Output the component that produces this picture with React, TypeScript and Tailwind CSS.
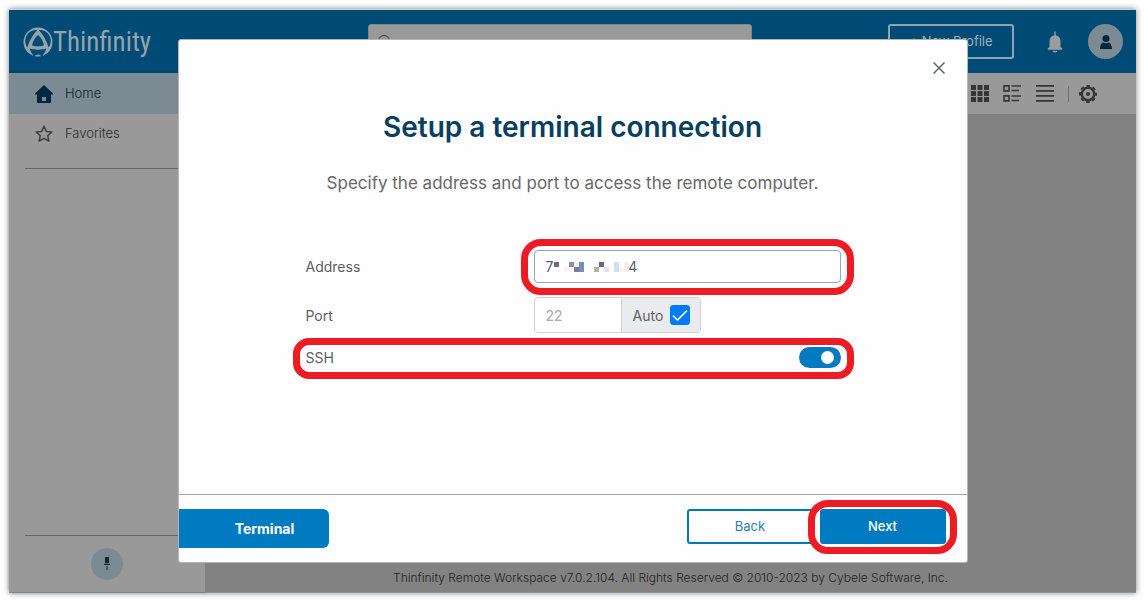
import { useState } from "react";
import type { ReactNode } from "react";

function Logo() {
  return (
    <a href="#" className="flex items-center text-[#97a3ab]" aria-label="Thinfinity">
      <svg viewBox="0 0 30 30" className="h-[30px] w-[30px]">
        <circle cx="15" cy="15" r="14.500" fill="currentColor" />
        <g fill="#004b76">
          <path d="M15 8C18 10.300 20.300 14 21 18.200C17.500 19.800 12.500 19.800 9 18.200C9.700 14 12 10.300 15 8Z" />
          <path d="M6.500 21.500C11.500 23 18.500 23 23.500 21.500C22.500 24.500 20.500 27 19 30C17.500 26.500 12.500 26.500 11 30C9.500 27 7.500 24.500 6.500 21.500Z" />
          <path transform="rotate(120 15 15)" d="M5 21.500C11 23 19 23 25 21.500C23 26 19 28 15 28C11 28 7 26 5 21.500Z" />
          <path transform="rotate(240 15 15)" d="M5 21.500C11 23 19 23 25 21.500C23 26 19 28 15 28C11 28 7 26 5 21.500Z" />
        </g>
      </svg>
      <span className="font-['Liberation_Sans_Narrow','Roboto_Condensed',sans-serif] text-[27px] leading-9">Thinfinity</span>
    </a>
  );
}

function Highlight({ className, children }: { className: string; children?: ReactNode }) {
  return (
    <span aria-hidden="true" className={`pointer-events-none absolute border-[7px] border-[#ed1c24] ${className}`}>
      {children}
    </span>
  );
}

function Header() {
  return (
    <header className="flex h-[63px] shrink-0 items-center bg-[#004b76] pr-[13px] pl-[14px]">
      <div className="w-[345px] shrink-0">
        <Logo />
      </div>
      <label className="flex h-[35px] w-[384px] items-center rounded-[3px] border border-[#7c8990] bg-[#999999] px-2">
        <svg viewBox="0 0 16 16" className="h-4 w-4" fill="none" stroke="#2c3a42" strokeWidth="1">
          <circle cx="7" cy="7" r="5.500" />
          <path d="M11 11l4 4" />
        </svg>
        <input type="search" aria-label="Search connections" className="min-w-0 flex-1 bg-transparent outline-none" />
      </label>
      <div className="ml-auto flex items-center">
        <button className="h-[35px] w-[126px] rounded-[3px] border-2 border-[#8fa4b0] text-[13px] text-[#9fb0ba]">
          + New Profile
        </button>
        <button aria-label="Notifications" className="ml-[32px]">
          <svg viewBox="0 0 18 22" className="h-[22px] w-[18px]" fill="#999da0">
            <path d="M8.300 1a.7.700 0 0 1 1.400 0v3.200c3 .4 4.800 2.800 4.800 5.800v6l1.800 1.600v1.200H1.700v-1.200l1.800-1.600v-6c0-3 1.800-5.400 4.800-5.800z" />
            <path d="M6.500 19.800h5a2.500 1.700 0 0 1-5 0z" />
          </svg>
        </button>
        <button aria-label="Account" className="ml-6 flex h-[35px] w-[35px] items-center justify-center rounded-full bg-[#7c8b93]">
          <svg viewBox="0 0 12 14" className="h-[14px] w-3" fill="#00273d">
            <circle cx="6" cy="3.500" r="3.500" />
            <path d="M0 14c0-4 1.500-6 3-6.500 2 1 4 1 6 0 1.500.5 3 2.500 3 6.500z" />
          </svg>
        </button>
      </div>
    </header>
  );
}

function Sidebar() {
  return (
    <aside className="flex w-[196px] shrink-0 flex-col bg-[#999999] text-[13px] font-light shadow-[1px_0_3px_rgba(0,0,0,0.25)]">
      <nav>
        <a href="#home" className="flex h-[41px] items-center gap-3 bg-[#7c8b93] pl-[26px] text-[#12222b]">
          <svg viewBox="0 0 18 18" className="h-[18px] w-[18px]" fill="#00273d">
            <path fillRule="evenodd" d="M9 0L18 8.500V9.500H16V18H2V9.500H0V8.500ZM7 12v4h4v-4Z" />
          </svg>
          Home
        </a>
        <a href="#favorites" className="flex h-10 items-center gap-3 pl-[26px] text-[#2c2c2c]">
          <svg viewBox="0 0 18 18" className="h-[18px] w-[18px]" fill="none" stroke="#3f3f3f" strokeWidth="1.500" strokeLinejoin="round">
            <path d="M9 1.300l2.300 5.100 5.600.6-4.200 3.700 1.200 5.500L9 13.400l-4.900 2.800 1.200-5.500L1.100 7l5.600-.6z" />
          </svg>
          Favorites
        </a>
      </nav>
      <hr className="mx-4 mt-[14px] border-[#666666]" />
      <hr className="mx-4 mt-auto border-[#666666]" />
      <button aria-label="Pin sidebar" className="mx-auto my-3 flex h-8 w-8 items-center justify-center rounded-full bg-[#7c8b93]">
        <svg viewBox="0 0 8 14" className="h-[14px] w-2" fill="#0c2634">
          <path d="M2 0h4v6H2zM1 6.800h6v1.200H1zM3.500 9h1v4h-1z" />
        </svg>
      </button>
    </aside>
  );
}

function Toolbar() {
  return (
    <div className="flex h-[41px] items-center justify-end bg-[#999999] pr-[39px] text-[#363636]">
      <button aria-label="Grid view">
        <svg viewBox="0 0 18 18" className="h-[18px] w-[18px]" fill="currentColor">
          <path d="M0 0h5v5H0zM6.500 0h5v5h-5zM13 0h5v5h-5zM0 6h5v5H0zM6.500 6h5v5h-5zM13 6h5v5h-5zM0 12h5v5H0zM6.500 12h5v5h-5zM13 12h5v5h-5z" />
        </svg>
      </button>
      <button aria-label="Detail view" className="ml-[14px]">
        <svg viewBox="0 0 18 18" className="h-[18px] w-[18px]" fill="none" stroke="currentColor" strokeWidth="1.600">
          <path d="M1 .9h5v5H1zM1 10.900h5v5H1zM8.500 1h9.500M8.500 5.500h7.500M8.500 11h9.500M8.500 15.500h7.500" />
        </svg>
      </button>
      <button aria-label="List view" className="ml-[15px]">
        <svg viewBox="0 0 18 18" className="h-[18px] w-[18px]" fill="currentColor">
          <path d="M0 0h18v1.800H0zM0 5h18v1.800H0zM0 10h18v1.800H0zM0 15h18v1.800H0z" />
        </svg>
      </button>
      <span className="ml-[14px] h-4 w-px bg-[#707070]" />
      <button aria-label="Settings" className="ml-[10px]">
        <svg viewBox="0 0 18 18" className="h-[18px] w-[18px]" fill="none" stroke="currentColor">
          <circle cx="9" cy="9" r="6.200" strokeWidth="2.400" />
          <circle cx="9" cy="9" r="8" strokeWidth="2" strokeDasharray="3.540 2.740" strokeDashoffset="1.770" />
          <circle cx="9" cy="9" r="2.100" fill="currentColor" stroke="none" />
        </svg>
      </button>
    </div>
  );
}

const mosaic: [number, number, number, number, string][] = [
  [0, 0, 5, 5, "#6f6f73"],
  [10, 5, 5, 5, "#fdf3ee"],
  [15, 0, 5, 5, "#8b8f99"],
  [20, 0, 5, 5, "#e2f4fd"],
  [20, 5, 5, 5, "#7d7b93"],
  [25, 0, 5, 10, "#7590b5"],
  [40, 5, 5, 5, "#b9b0a1"],
  [45, 0, 5, 5, "#5d6b86"],
  [50, 5, 5, 5, "#e9dcf1"],
  [60, 0, 5, 10, "#d2ddf7"],
  [65, 5, 5, 5, "#fbf8e9"],
  [70, 0, 5, 10, "#f6eeec"],
];

const fieldLabel = "w-[228px] shrink-0";

function ConnectionDialog({ onClose }: { onClose: () => void }) {
  const [address, setAddress] = useState("7" + " ".repeat(19) + "4");
  const [auto, setAuto] = useState(true);
  const [ssh, setSsh] = useState(true);
  return (
    <section
      role="dialog"
      aria-modal="true"
      aria-labelledby="dialog-title"
      className="relative flex min-h-[524px] w-[790px] flex-col rounded-[3px] border border-[#b5b5b5] bg-[#fefdff]"
    >
      <button aria-label="Close" onClick={onClose} className="absolute top-[22px] right-[22px] text-[#5c6670]">
        <svg viewBox="0 0 12 12" className="h-3 w-3" fill="none" stroke="currentColor" strokeWidth="1.500">
          <path d="M.5.500l11 11M11.500.500l-11 11" />
        </svg>
      </button>

      <h1 id="dialog-title" className="mt-[67px] text-center text-[28px] leading-10 font-semibold text-[#05405f]">
        Setup a terminal connection
      </h1>
      <p className="mt-6 text-center text-[17px] leading-6 text-[#686868]">
        Specify the address and port to access the remote computer.
      </p>

      <form className="mt-[55px] mr-[126px] ml-[127px] flex flex-col text-[14px] text-[#5f5f5f]">
        <div className="flex items-center">
          <label htmlFor="address" className={fieldLabel}>Address</label>
          <div className="relative flex-1">
            <input
              id="address"
              value={address}
              onChange={(e) => setAddress(e.target.value)}
              className="block h-[33px] w-full rounded-[4px] border border-[#98a5b0] bg-transparent px-[11px] outline-none"
            />
            <svg viewBox="0 0 75 10" className="pointer-events-none absolute top-3 left-[20px] h-[10px] w-[75px]" shapeRendering="crispEdges">
              {mosaic.map(([x, y, w, h, fill]) => (
                <rect key={`${x}-${y}`} x={x} y={y} width={w} height={h} fill={fill} />
              ))}
            </svg>
            <Highlight className="-inset-x-[13px] -top-[11px] -bottom-3 rounded-[20px]" />
          </div>
        </div>

        <div className="mt-[14px] flex items-center">
          <label htmlFor="port" className={fieldLabel}>Port</label>
          <div className="flex h-9 overflow-hidden rounded-[4px] border border-[#cfd3d8]">
            <input id="port" defaultValue="22" disabled={auto} className="w-[86px] px-[11px] text-[#a9a9a9] outline-none" />
            <label className="flex items-center gap-[7px] border-l border-[#cfd3d8] bg-[#e9ebef] pr-[10px] pl-[11px]">
              Auto
              <span className="relative h-5 w-5">
                <input
                  type="checkbox"
                  checked={auto}
                  onChange={(e) => setAuto(e.target.checked)}
                  className="peer block h-5 w-5 appearance-none rounded-[3px] border border-[#007bff] checked:bg-[#007bff]"
                />
                <svg viewBox="0 0 20 20" className="pointer-events-none absolute inset-0 hidden h-5 w-5 peer-checked:block" fill="none" stroke="white" strokeWidth="1.600">
                  <path d="M3 10.500L7.500 15L17 5.500" />
                </svg>
              </span>
            </label>
          </div>
        </div>

        <div className="relative mt-3 flex h-[25px] items-center justify-between">
          <label htmlFor="ssh">SSH</label>
          <span className="relative h-[21px] w-[42px]">
            <input
              id="ssh"
              type="checkbox"
              role="switch"
              checked={ssh}
              onChange={(e) => setSsh(e.target.checked)}
              className="peer block h-[21px] w-[42px] appearance-none rounded-full bg-[#9aa5ad] checked:bg-[#007ac1]"
            />
            <span className="pointer-events-none absolute top-1 left-[7px] h-[13px] w-[13px] rounded-full bg-white peer-checked:left-[22px]" />
          </span>
          <Highlight className="-inset-x-[13px] -top-[7px] -bottom-[9px] rounded-[16px]" />
        </div>
      </form>

      <footer className="mt-auto flex h-[68px] items-start border-t border-[#a3a3a3] pt-[14px] pr-[21px]">
        <button className="h-[39px] w-[150px] rounded-r-[6px] bg-[#007ac1] pl-[22px] text-[14px] font-bold text-white">Terminal</button>
        <button className="ml-auto h-[35px] w-[127px] rounded-[3px] border-2 border-[#007ab5] text-[13px] text-[#287fae]">Back</button>
        <div className="relative ml-[6px]">
          <button className="block h-[35px] w-[126px] rounded-[3px] bg-[#007ac1] text-[13px] font-medium text-white">Next</button>
          <Highlight className="-top-[9px] -right-[11px] -bottom-[10px] -left-3 rounded-[20px]" />
        </div>
      </footer>
    </section>
  );
}

export default function App() {
  const [open, setOpen] = useState(true);
  return (
    <div className="flex min-h-screen bg-white pt-[9px] pr-2 pb-[7px] pl-[9px] font-['Inter',sans-serif]">
      <div className="relative flex flex-1 flex-col border-t border-b border-t-[#b9d5e2] border-b-[#7d98a6] shadow-[0_0_6px_rgba(0,0,0,0.5)]">
        <Header />
        <div className="flex flex-1">
          <Sidebar />
          <div className="flex min-w-0 flex-1 flex-col bg-[#828282]">
            <Toolbar />
            <p className="mt-auto pb-1 text-center text-[12px] leading-5 font-light text-[#222222]">
              Thinfinity Remote Workspace v7.0.2.104. All Rights Reserved © 2010-2023 by Cybele Software, Inc.
            </p>
          </div>
        </div>
        {open && (
          <div className="absolute inset-0 flex items-center justify-center">
            <ConnectionDialog onClose={() => setOpen(false)} />
          </div>
        )}
      </div>
    </div>
  );
}
